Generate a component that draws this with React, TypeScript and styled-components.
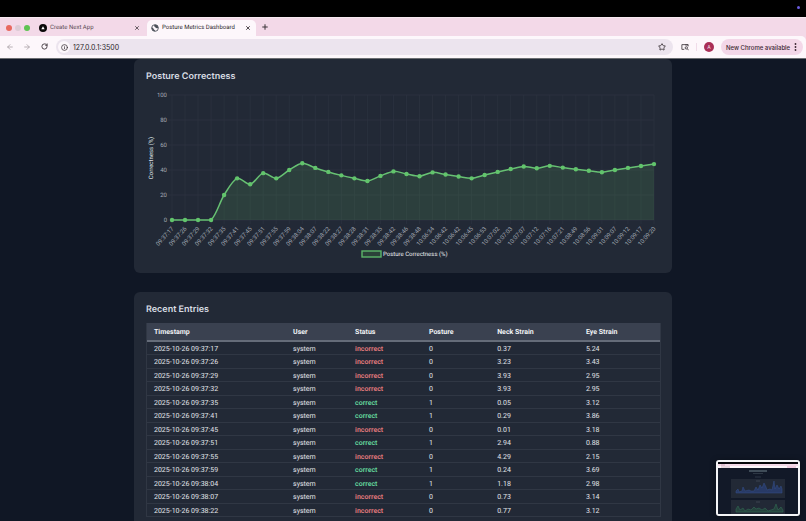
import React from "react";
import styled, { createGlobalStyle } from "styled-components";
import { ArrowLeft, ArrowRight, Info, Plus, RotateCw, Star, X } from "lucide-react";

const GlobalStyle = createGlobalStyle`
  * { box-sizing: border-box; }
  html, body { margin: 0; padding: 0; background: #101725; }
  body {
    font-family: Inter, "Liberation Sans", sans-serif;
    text-rendering: geometricPrecision;
    overflow: hidden;
  }
  button, input { font: inherit; color: inherit; margin: 0; padding: 0; border: 0; background: none; }
  h2 { margin: 0; }
`;

const Screen = styled.div`
  display: flex;
  flex-direction: column;
  height: 100vh;
  background: #f3d9e8;
  overflow: hidden;
`;

const MenuBar = styled.div`
  display: flex;
  flex: none;
  justify-content: flex-end;
  height: 17px;
  padding: 6px 6px 0 0;
  background: #000;
`;

const MicDot = styled.span`
  width: 3px;
  height: 3px;
  border-radius: 50%;
  background: #6a5be0;
`;

const TabStrip = styled.div`
  display: flex;
  flex: none;
  align-items: stretch;
  height: 19px;
  padding: 2px 0 0 6px;
  border-top: 1px solid #f8e9f1;
`;

const Lights = styled.div`
  display: flex;
  align-items: center;
  gap: 3px;
  width: 29px;
  padding-bottom: 1px;
`;

const Light = styled.span<{ $color: string }>`
  width: 6px;
  height: 6px;
  border-radius: 50%;
  background: ${(p) => p.$color};
`;

const Tab = styled.div<{ $active?: boolean }>`
  display: flex;
  align-items: center;
  gap: 3px;
  width: ${(p) => (p.$active ? 109 : 112)}px;
  padding: ${(p) => (p.$active ? "0 4px 1px" : "0 6px 1px 4px")};
  border-radius: 5px 5px 0 0;
  background: ${(p) => (p.$active ? "#fdf7fb" : "transparent")};
  color: ${(p) => (p.$active ? "#2b2529" : "#5b4b55")};
  font-family: Roboto, sans-serif;
  font-size: 6px;
  line-height: 8px;
`;

const TabTitle = styled.span`
  flex: 1;
  padding-top: 1px;
  white-space: nowrap;
`;

const IconButton = styled.button<{ $dim?: boolean }>`
  display: flex;
  align-items: center;
  justify-content: center;
  flex: none;
  width: 8px;
  height: 100%;
  color: ${(p) => (p.$dim ? "#a79fa5" : "#3b3439")};
`;

const NewTab = styled(IconButton)`
  margin-left: 5px;
  padding-bottom: 2px;
`;

const Toolbar = styled.div`
  display: flex;
  flex: none;
  align-items: center;
  height: 22px;
  padding: 0 3px 0 6px;
  border-radius: 0 5px 0 0;
  background: #fdf7fb;
  color: #3b3439;
`;

const NavGroup = styled.nav`
  display: flex;
  gap: 9px;
  width: 50px;
`;

const AddressBar = styled.div`
  display: flex;
  flex: 1;
  align-items: center;
  gap: 3px;
  height: 16px;
  padding: 0 7px 0 2px;
  border-radius: 8px;
  background: #ece4ee;
`;

const SiteInfo = styled.button`
  display: flex;
  align-items: center;
  justify-content: center;
  width: 12px;
  height: 12px;
  border-radius: 50%;
  background: #fdf7fb;
`;

const AddressInput = styled.input`
  flex: 1;
  min-width: 0;
  padding-top: 1px;
  outline: none;
  color: #2b2529;
  font-size: 7px;
  line-height: 10px;
`;

const ToolbarEnd = styled.div`
  display: flex;
  align-items: center;
  gap: 7px;
  padding-left: 8px;
`;

const Divider = styled.span`
  width: 1px;
  height: 8px;
  background: #f0dce9;
`;

const Avatar = styled.button`
  width: 10px;
  height: 10px;
  border-radius: 50%;
  background: #a92f57;
  color: #f6dfe8;
  font-size: 5px;
  line-height: 10px;
  text-align: center;
`;

const UpdateButton = styled.button`
  display: flex;
  align-items: center;
  justify-content: space-between;
  width: 82px;
  height: 16px;
  padding: 0 6px 0 5px;
  border-radius: 8px;
  background: #f3d7e8;
  color: #3b2632;
  font-size: 6px;
  font-weight: 500;
  white-space: nowrap;
`;

const Page = styled.main`
  display: flex;
  flex: 1;
  flex-direction: column;
  gap: 19px;
  min-height: 0;
  padding: 0 134px;
  border-top: 1px solid #6c6e72;
  background: #101725;
  overflow: hidden;
`;

const Card = styled.section<{ $grow?: boolean }>`
  flex: ${(p) => (p.$grow ? "1 0 auto" : "none")};
  padding: 12px 11px 9px 12px;
  border-radius: ${(p) => (p.$grow ? "6px 6px 0 0" : "6px")};
  background: #222936;
`;

const CardTitle = styled.h2`
  color: #d8dce3;
  font-size: 9px;
  font-weight: 600;
  line-height: 12px;
`;

const Chart = styled.svg`
  display: block;
  width: 100%;
  height: auto;
  margin-top: 8px;
  font-family: Roboto, "Liberation Sans", sans-serif;
  font-size: 6px;
`;

const Table = styled.table`
  width: 100%;
  margin-top: 7px;
  table-layout: fixed;
  border-collapse: separate;
  border-spacing: 0;
  border: 1px solid #303744;
  border-width: 0 1px;
  color: #e3e6eb;
  font-family: Roboto, sans-serif;
  font-size: 7px;
  line-height: 10px;
`;

const Col = styled.col<{ $width: number }>`
  width: ${(p) => p.$width}%;
`;

const HeadCell = styled.th`
  height: 19px;
  padding: 1px 7px 0;
  border-bottom: 2px solid #656c79;
  background: #3a4150;
  color: #f0f2f5;
  font-weight: 700;
  text-align: left;
`;

const Row = styled.tr`
  height: 13px;
  &:nth-child(even) { height: 14px; }
`;

const Cell = styled.td`
  padding: 1px 7px 0;
  border-bottom: 1px solid #303744;
`;

const Status = styled.span<{ $ok: boolean }>`
  color: ${(p) => (p.$ok ? "#62d69c" : "#e27a7d")};
  font-weight: 600;
`;

const Preview = styled.aside`
  position: fixed;
  right: 6px;
  bottom: 5px;
  width: 84px;
  height: 56px;
  border: 2px solid #f4f5f7;
  border-radius: 3px;
  background: #121928;
  box-shadow: 0 1px 6px rgba(0, 0, 0, 0.4);
  overflow: hidden;
  svg { display: block; width: 100%; height: 100%; }
`;

const times = [
  "09:37:17", "09:37:26", "09:37:29", "09:37:32", "09:37:35", "09:37:41", "09:37:45", "09:37:51",
  "09:37:55", "09:37:59", "09:38:04", "09:38:07", "09:38:22", "09:38:27", "09:38:28", "09:38:31",
  "09:38:35", "09:38:42", "09:38:46", "09:38:48", "10:06:34", "10:06:42", "10:06:42", "10:06:45",
  "10:06:53", "10:07:02", "10:07:03", "10:07:07", "10:07:12", "10:07:16", "10:07:21", "10:08:49",
  "10:08:56", "10:09:01", "10:09:07", "10:09:12", "10:09:17", "10:09:20",
];

const strains: [string, string][] = [
  ["0.37", "5.24"], ["3.23", "3.43"], ["3.93", "2.95"], ["3.93", "2.95"], ["0.05", "3.12"],
  ["0.29", "3.86"], ["0.01", "3.18"], ["2.94", "0.88"], ["4.29", "2.15"], ["0.24", "3.69"],
  ["1.18", "2.98"], ["0.73", "3.14"], ["0.77", "3.12"],
];

/* Number of correct postures up to and including each entry. */
const correctCounts = [
  0, 0, 0, 0, 1, 2, 2, 3, 3, 4, 5, 5, 5, 5, 5, 5, 6, 7, 7, 7, 8, 8, 8, 8, 9, 10, 11, 12, 12, 13, 13,
  13, 13, 13, 14, 15, 16, 17,
];
const isCorrect = (i: number) => i > 0 && correctCounts[i] > correctCounts[i - 1];

const plot = { left: 26, right: 508, top: 4, bottom: 129 };
const xAt = (i: number) => plot.left + ((plot.right - plot.left) * i) / (times.length - 1);
const yAt = (v: number) => plot.bottom - ((plot.bottom - plot.top) * v) / 100;
const points = correctCounts.map((c, i) => ({ x: xAt(i), y: yAt((100 * c) / (i + 1)) }));

function smoothPath(pts: { x: number; y: number }[], tension: number) {
  const cap = (y: number) => Math.min(plot.bottom, Math.max(plot.top, y));
  const controls = pts.map((p, i) => {
    const a = pts[Math.max(0, i - 1)];
    const b = pts[Math.min(pts.length - 1, i + 1)];
    const d1 = Math.hypot(p.x - a.x, p.y - a.y);
    const d2 = Math.hypot(b.x - p.x, b.y - p.y);
    const f1 = (tension * d1) / (d1 + d2);
    const f2 = (tension * d2) / (d1 + d2);
    return {
      inX: p.x - f1 * (b.x - a.x),
      inY: cap(p.y - f1 * (b.y - a.y)),
      outX: p.x + f2 * (b.x - a.x),
      outY: cap(p.y + f2 * (b.y - a.y)),
    };
  });
  return pts.reduce((d, p, i) => {
    if (i === 0) return `M${p.x} ${p.y}`;
    const c0 = controls[i - 1];
    const c1 = controls[i];
    return `${d}C${c0.outX} ${c0.outY} ${c1.inX} ${c1.inY} ${p.x} ${p.y}`;
  }, "");
}

function CorrectnessChart() {
  const line = smoothPath(points, 0.3);
  return (
    <Chart viewBox="0 0 515 173" role="img" aria-label="Posture correctness over time">
      {[0, 20, 40, 60, 80, 100].map((v) => (
        <g key={v}>
          <line x1={plot.left - 4} x2={plot.right} y1={yAt(v)} y2={yAt(v)} stroke="#2e3542" strokeWidth="0.7" />
          <text x={plot.left - 5} y={yAt(v) + 2} textAnchor="end" fill="#a3a9b4">{v}</text>
        </g>
      ))}
      {points.map((p, i) => (
        <line key={i} x1={p.x} x2={p.x} y1={plot.top} y2={plot.bottom + 4} stroke="#2c3340" strokeWidth="0.7" />
      ))}
      <path d={`${line}L${plot.right} ${plot.bottom}L${plot.left} ${plot.bottom}Z`} fill="#549c59" fillOpacity="0.2" />
      <path d={line} fill="none" stroke="#67c173" strokeWidth="1.5" />
      {points.map((p, i) => (
        <circle key={i} cx={p.x} cy={p.y} r="2.2" fill="#62c46c" />
      ))}
      {times.map((t, i) => (
        <text key={i} transform={`translate(${xAt(i) + 2} 138) rotate(-48)`} textAnchor="end" fill="#a3a9b4">{t}</text>
      ))}
      <text transform="translate(7 67) rotate(-90)" textAnchor="middle" fill="#dfe2e7">Correctness (%)</text>
      <rect x="216" y="160" width="19" height="6" fill="#2b4139" stroke="#5cb568" strokeWidth="1.4" />
      <text x="237" y="165" fill="#eceef1">Posture Correctness (%)</text>
    </Chart>
  );
}

function EntriesTable() {
  return (
    <Table>
      <colgroup>
        {[27.1, 12.1, 14.4, 13.3, 17.3, 15.8].map((w, i) => <Col key={i} $width={w} />)}
      </colgroup>
      <thead>
        <tr>
          {["Timestamp", "User", "Status", "Posture", "Neck Strain", "Eye Strain"].map((h) => (
            <HeadCell key={h} scope="col">{h}</HeadCell>
          ))}
        </tr>
      </thead>
      <tbody>
        {strains.map(([neck, eye], i) => (
          <Row key={i}>
            <Cell>2025-10-26 {times[i]}</Cell>
            <Cell>system</Cell>
            <Cell><Status $ok={isCorrect(i)}>{isCorrect(i) ? "correct" : "incorrect"}</Status></Cell>
            <Cell>{isCorrect(i) ? 1 : 0}</Cell>
            <Cell>{neck}</Cell>
            <Cell>{eye}</Cell>
          </Row>
        ))}
      </tbody>
    </Table>
  );
}

function Globe() {
  return (
    <svg width="8" height="8" viewBox="0 0 24 24" aria-hidden="true">
      <circle cx="12" cy="12" r="10" fill="#fdf7fb" stroke="#4a5058" strokeWidth="2.6" />
      <path d="M3 10l5 4 1 3 3 1-1 4-5-2-4-6zM10 3l-1 4 4 2 1 3 5 1 3-2-2-6-5-3z" fill="#4a5058" />
    </svg>
  );
}

function NextLogo() {
  return (
    <svg width="8" height="8" viewBox="0 0 24 24" aria-hidden="true">
      <circle cx="12" cy="12" r="12" fill="#0a0809" />
      <path d="M12 7l5 9H7z" fill="#fff" />
    </svg>
  );
}

function SearchPanelIcon() {
  return (
    <svg width="9" height="8" viewBox="0 0 27 24" fill="none" stroke="#3b3439" strokeWidth="2.8" aria-hidden="true">
      <path d="M11 20H3V4h21v6M14 5h10" />
      <circle cx="18" cy="15" r="4" />
      <path d="M21 18l5 5" />
    </svg>
  );
}

function ScreenPreview() {
  return (
    <Preview aria-label="Screen capture preview">
      <svg viewBox="0 0 80 52" preserveAspectRatio="none">
        <rect width="80" height="52" fill="#121928" />
        <rect width="80" height="2" fill="#05060a" />
        <rect y="2" width="80" height="2" fill="#f3d9e8" />
        <rect y="4" width="80" height="2" fill="#fdf7fb" />
        <path d="M3 3h4M3 5h9" stroke="#b58aa0" strokeWidth="0.6" />
        <path d="M69 5h9" stroke="#e6a7c9" strokeWidth="1" />
        <path d="M31 9h18" stroke="#6d8088" strokeWidth="1" />
        <path d="M35 11.500h10M37 15h6" stroke="#3f4b57" strokeWidth="0.6" />
        <rect x="13" y="17" width="54" height="19" fill="#222936" />
        <rect x="13" y="38" width="54" height="14" fill="#222936" />
        <path d="M38 19h4M38 40h4" stroke="#59606e" strokeWidth="0.5" />
        <path d="M18 29l2-2 1 3 3-1 1-4 2 4 4-1 2 1 3 0 2-4 2 3 2-5 2 3 2-5 2 4 1 3 3-1 2 1 2-9 1 8 2-4 2 4 2-3 1 3V31H18z" fill="#283a66" stroke="#34508c" strokeWidth="0.5" />
        <path d="M18 47l2-3 2 4 3-2 2 3 3-2 3 1 3-3 2 2 3-1 3 2 3-2 3 3 3-1 3-1 2-5 2 6 3-3 2 3V50H18z" fill="#26423e" stroke="#357558" strokeWidth="0.5" />
      </svg>
    </Preview>
  );
}

export default function App() {
  return (
    <>
      <GlobalStyle />
      <Screen>
        <MenuBar><MicDot /></MenuBar>
        <TabStrip>
          <Lights>
            <Light $color="#e8695f" />
            <Light $color="#dccbd5" />
            <Light $color="#5ec352" />
          </Lights>
          <Tab>
            <NextLogo />
            <TabTitle>Create Next App</TabTitle>
            <IconButton aria-label="Close Create Next App"><X size={6} strokeWidth={3} /></IconButton>
          </Tab>
          <Tab $active>
            <Globe />
            <TabTitle>Posture Metrics Dashboard</TabTitle>
            <IconButton aria-label="Close Posture Metrics Dashboard"><X size={6} strokeWidth={3.5} /></IconButton>
          </Tab>
          <NewTab aria-label="New tab"><Plus size={8} strokeWidth={3} /></NewTab>
        </TabStrip>
        <Toolbar>
          <NavGroup>
            <IconButton $dim aria-label="Back"><ArrowLeft size={8} strokeWidth={2.4} /></IconButton>
            <IconButton $dim aria-label="Forward"><ArrowRight size={8} strokeWidth={2.4} /></IconButton>
            <IconButton aria-label="Reload"><RotateCw size={7} strokeWidth={3} /></IconButton>
          </NavGroup>
          <AddressBar>
            <SiteInfo aria-label="Site information"><Info size={7} strokeWidth={2.6} /></SiteInfo>
            <AddressInput aria-label="Address" defaultValue="127.0.0.1:3500" />
            <IconButton aria-label="Bookmark"><Star size={8} strokeWidth={2.6} /></IconButton>
          </AddressBar>
          <ToolbarEnd>
            <IconButton aria-label="Search side panel"><SearchPanelIcon /></IconButton>
            <Divider />
            <Avatar aria-label="Profile">A</Avatar>
            <UpdateButton>
              New Chrome available
              <svg width="3" height="8" viewBox="0 0 3 8" fill="#3b2632" aria-hidden="true">
                <circle cx="1.500" cy="1" r="0.9" />
                <circle cx="1.500" cy="4" r="0.9" />
                <circle cx="1.500" cy="7" r="0.9" />
              </svg>
            </UpdateButton>
          </ToolbarEnd>
        </Toolbar>
        <Page>
          <Card>
            <CardTitle>Posture Correctness</CardTitle>
            <CorrectnessChart />
          </Card>
          <Card $grow>
            <CardTitle>Recent Entries</CardTitle>
            <EntriesTable />
          </Card>
        </Page>
      </Screen>
      <ScreenPreview />
    </>
  );
}
